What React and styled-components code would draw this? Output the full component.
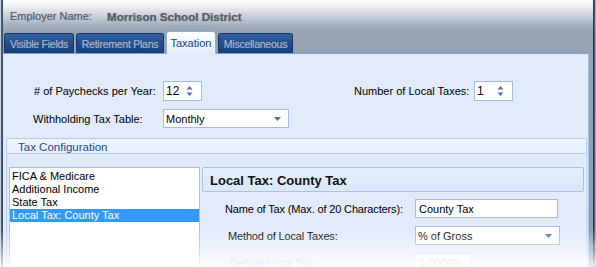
import React from "react";
import styled, { createGlobalStyle } from "styled-components";

const GlobalStyle = createGlobalStyle`
  html, body {
    margin: 0;
    padding: 0;
    background: #ffffff;
  }
  body {
    font-family: "Liberation Sans", Arial, sans-serif;
    font-size: 11px;
    color: #000;
  }
`;

const taxes = ["FICA & Medicare", "Additional Income", "State Tax", "Local Tax: County Tax"];
const tabs = [
  { label: "Visible Fields", width: 70 },
  { label: "Retirement Plans", width: 88 },
  { label: "Taxation", width: 50 },
  { label: "Miscellaneous", width: 75 },
];

function Spinner() {
  return (
    <SpinIcon width="7" height="12" viewBox="0 0 7 12">
      <path d="M3.5 1 L6.5 4.5 L0.5 4.5 Z" fill="#4d73ad" />
      <path d="M0.5 7.5 L6.5 7.5 L3.5 11 Z" fill="#4d73ad" />
    </SpinIcon>
  );
}

function DropArrow() {
  return (
    <ArrowIcon width="7" height="4" viewBox="0 0 7 4">
      <path d="M0 0 L7 0 L3.5 4 Z" fill="#4d73ad" />
    </ArrowIcon>
  );
}

export default function App() {
  return (
    <>
      <GlobalStyle />
      <Window>
        <LeftEdge />
        <Main>
          <TopBar>
            <Caption>Employer Name:</Caption>
            <Employer>Morrison School District</Employer>
          </TopBar>
          <TabStrip>
            {tabs.map((t) => (
              <Tab key={t.label} $width={t.width} $active={t.label === "Taxation"}>
                {t.label}
              </Tab>
            ))}
          </TabStrip>
          <Panel>
            <FormRow>
              <Label $width={129}>
                # of Paychecks per Year:
              </Label>
              <NumberBox $width={39}>
                12
                <Spinner />
              </NumberBox>
              <Label $width={113} $offset={152}>
                Number of Local Taxes:
              </Label>
              <NumberBox $width={39} $offset={7}>
                1
                <Spinner />
              </NumberBox>
            </FormRow>
            <FormRow $top={8} $left={30}>
              <Label $width={130}>Withholding Tax Table:</Label>
              <SelectBox $width={126}>
                Monthly
                <DropArrow />
              </SelectBox>
            </FormRow>

            <Group>
              <GroupHeader>Tax Configuration</GroupHeader>
              <GroupBody>
                <ListBox>
                  {taxes.map((t) => (
                    <ListItem key={t} $selected={t === "Local Tax: County Tax"}>
                      {t}
                    </ListItem>
                  ))}
                </ListBox>
                <DetailPane>
                  <DetailHeader>Local Tax: County Tax</DetailHeader>
                  <DetailGrid>
                    <FieldLabel $indent={0}>Name of Tax (Max. of 20 Characters):</FieldLabel>
                    <TextBox $width={143}>County Tax</TextBox>
                    <FieldLabel $indent={3}>Method of Local Taxes:</FieldLabel>
                    <SelectBox $width={145}>
                      % of Gross
                      <DropArrow />
                    </SelectBox>
                    <FieldLabel $indent={5} $disabled>
                      Default Local Tax:
                    </FieldLabel>
                    <TextBox $width={56} $disabled>
                      1.0000%
                    </TextBox>
                  </DetailGrid>
                </DetailPane>
              </GroupBody>
            </Group>
          </Panel>
        </Main>
        <RightEdge />
        <BottomFade />
      </Window>
    </>
  );
}

const Window = styled.div`
  position: relative;
  display: flex;
  width: 596px;
  height: 267px;
  overflow: hidden;
  background: #fff;
`;

const LeftEdge = styled.div`
  width: 3px;
  flex: none;
  background: linear-gradient(to right, #c9ced6 0, #c9ced6 1px, #4a6188 1px, #2e4a76 3px);
`;

const RightEdge = styled.div`
  width: 3px;
  flex: none;
  background: linear-gradient(to right, #223f6f 0, #1b3766 1px, #6e7c92 2px, #d5dae1 3px);
`;

const Main = styled.div`
  flex: 1;
  display: flex;
  flex-direction: column;
  min-width: 0;
  background: linear-gradient(
    to bottom,
    #fbfcfd 0,
    #eef0f3 6px,
    #c6cdd7 17px,
    #a2adbb 26px,
    #97a3b3 31px,
    #8e9bad 100%
  );
`;

const TopBar = styled.div`
  height: 31px;
  display: flex;
  align-items: center;
  padding-left: 7px;
  padding-top: 1px;
  box-sizing: border-box;
`;

const Caption = styled.span`
  width: 97px;
  font-size: 11px;
  color: #5e6269;
  text-shadow: 0 0 1px rgba(90, 95, 105, 0.6);
`;

const Employer = styled.span`
  font-size: 11.6px;
  font-weight: bold;
  color: #5a5e66;
  text-shadow: 0 0 1px rgba(90, 95, 105, 0.7);
`;

const TabStrip = styled.div`
  height: 22px;
  display: flex;
  align-items: flex-end;
  gap: 2px;
  padding-left: 1px;
  position: relative;
  z-index: 1;
`;

const Tab = styled.div`
  box-sizing: border-box;
  width: ${({ $width }) => $width}px;
  flex: none;
  height: ${({ $active }) => ($active ? "23px" : "20px")};
  margin-bottom: ${({ $active }) => ($active ? "-1px" : "0")};
  padding-top: ${({ $active }) => ($active ? "4px" : "3px")};
  text-align: center;
  white-space: nowrap;
  font-size: ${({ $active }) => ($active ? "11px" : "10.5px")};
  letter-spacing: ${({ $active }) => ($active ? "0" : "-0.25px")};
  line-height: 14px;
  border-radius: 3px 3px 0 0;
  border: 1px solid ${({ $active }) => ($active ? "#8db0de" : "#163a70")};
  border-bottom: none;
  color: ${({ $active }) => ($active ? "#15428b" : "#a7b0c1")};
  text-shadow: ${({ $active }) => ($active ? "none" : "0 0 1px rgba(170, 180, 196, 0.6)")};
  background: ${({ $active }) =>
    $active
      ? "linear-gradient(to bottom, #ffffff 0, #f3f8fe 40%, #e1ebfa 100%)"
      : "linear-gradient(to bottom, #33629f 0, #234f8d 45%, #183f7c 100%)"};
`;

const Panel = styled.div`
  flex: 1;
  margin-right: 4px;
  display: flex;
  flex-direction: column;
  background: #e1ebfa;
  border-top: 1px solid #7d9fcd;
  border-right: 1px solid #a5bfe2;
  min-height: 0;
`;

const FormRow = styled.div`
  display: flex;
  align-items: center;
  margin-top: ${({ $top }) => ($top ?? 27)}px;
  padding-left: ${({ $left }) => ($left ?? 31)}px;
`;

const Label = styled.div`
  width: ${({ $width }) => $width}px;
  margin-left: ${({ $offset }) => $offset || 0}px;
  flex: none;
  font-size: 11px;
  white-space: nowrap;
`;

const Field = styled.div`
  box-sizing: border-box;
  width: ${({ $width }) => $width}px;
  margin-left: ${({ $offset }) => $offset || 0}px;
  flex: none;
  display: flex;
  align-items: center;
  justify-content: space-between;
  background: ${({ $disabled }) => ($disabled ? "#f7f9fc" : "#ffffff")};
  border: 1px solid ${({ $disabled }) => ($disabled ? "#d4dde9" : "#a7bcd8")};
  color: ${({ $disabled }) => ($disabled ? "#b8bcc2" : "#000")};
  font-size: 11px;
`;

const NumberBox = styled(Field)`
  height: 20px;
  padding: 0 8px 0 2px;
  font-size: 12px;
`;

const SelectBox = styled(Field)`
  height: 19px;
  padding: 0 7px 0 2px;
`;

const TextBox = styled(Field)`
  height: 19px;
  padding: 0 3px;
`;

const SpinIcon = styled.svg`
  display: block;
`;

const ArrowIcon = styled.svg`
  display: block;
  margin-top: 1px;
`;

const Group = styled.div`
  flex: 1;
  display: flex;
  flex-direction: column;
  margin: 10px 1px 0 3px;
  min-height: 0;
`;

const GroupHeader = styled.div`
  box-sizing: border-box;
  height: 20px;
  padding: 2px 0 0 11px;
  font-size: 11.5px;
  color: #1b4a8c;
  border: 1px solid #b4cced;
  border-radius: 2px 2px 0 0;
  background: linear-gradient(to bottom, #eef5fe 0, #e6effc 100%);
`;

const GroupBody = styled.div`
  flex: 1;
  display: flex;
  gap: 2px;
  padding: 13px 2px 0 2px;
  border-left: 1px solid #b4cced;
  border-right: 1px solid #c4d7f1;
`;

const ListBox = styled.div`
  box-sizing: border-box;
  width: 191px;
  flex: none;
  background: #fff;
  border: 1px solid #a9bfdb;
  border-bottom: none;
  padding-top: 2px;
`;

const ListItem = styled.div`
  height: 13px;
  line-height: 13px;
  padding-left: 2px;
  font-size: 11px;
  white-space: nowrap;
  background: ${({ $selected }) => ($selected ? "#3399ff" : "transparent")};
  color: ${({ $selected }) => ($selected ? "#ffffff" : "#000")};
`;

const DetailPane = styled.div`
  flex: 1;
  display: flex;
  flex-direction: column;
`;

const DetailHeader = styled.div`
  box-sizing: border-box;
  height: 25px;
  display: flex;
  align-items: center;
  padding: 1px 0 0 7px;
  font-size: 13px;
  font-weight: bold;
  color: #111;
  border: 1px solid #a9c3e7;
  border-radius: 2px;
  background: linear-gradient(to bottom, #e4eefc 0, #dbe7f8 100%);
`;

const DetailGrid = styled.div`
  display: grid;
  grid-template-columns: 190px auto;
  align-items: center;
  row-gap: 8px;
  margin-top: 7px;
  padding-left: 23px;
  justify-items: start;
`;

const FieldLabel = styled.div`
  padding-left: ${({ $indent }) => $indent}px;
  font-size: 11px;
  letter-spacing: -0.15px;
  white-space: nowrap;
  color: ${({ $disabled }) => ($disabled ? "#b5b9bf" : "#000")};
`;

const BottomFade = styled.div`
  position: absolute;
  left: 0;
  right: 0;
  bottom: 0;
  height: 38px;
  pointer-events: none;
  background: linear-gradient(
    to bottom,
    rgba(255, 255, 255, 0) 0,
    rgba(255, 255, 255, 0.45) 55%,
    rgba(255, 255, 255, 0.85) 100%
  );
`;
